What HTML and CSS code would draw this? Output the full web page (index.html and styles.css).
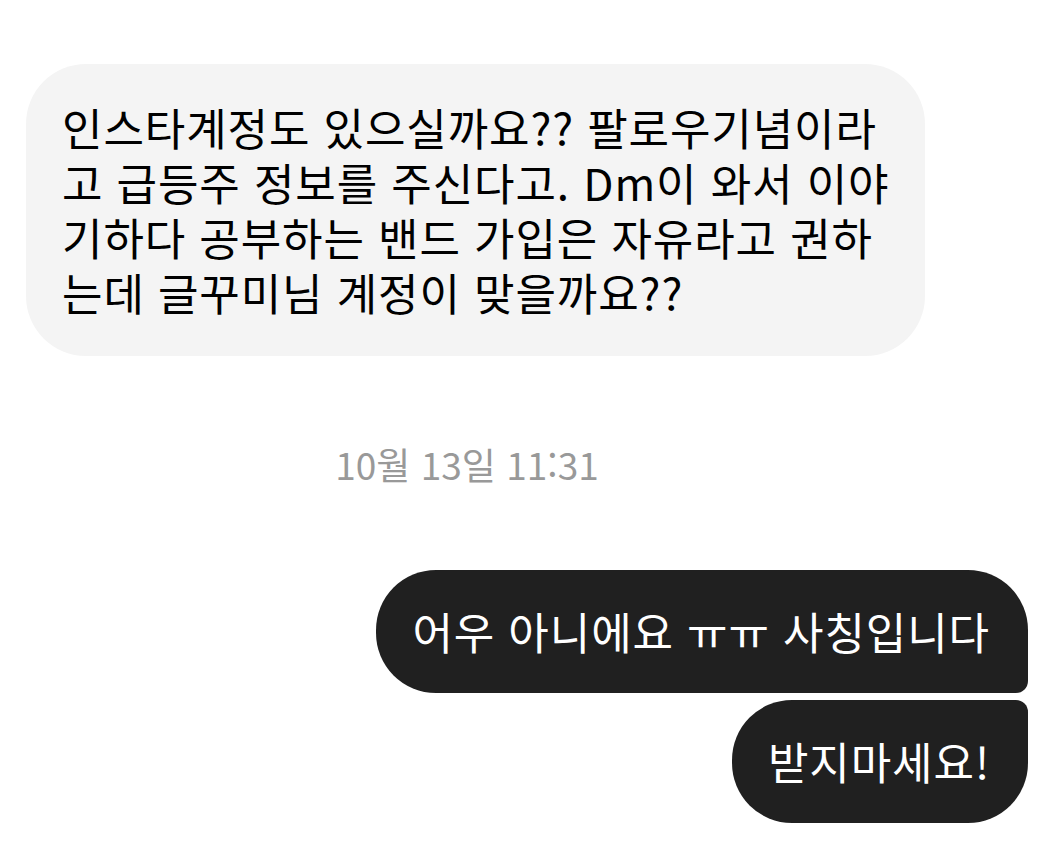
FILE: index.html
```html
<!DOCTYPE html>
<html lang="ko">
<head>
  <meta charset="UTF-8">
  <meta name="viewport" content="width=device-width, initial-scale=1.0">
  <title>Messages</title>
  <link rel="stylesheet" href="styles.css">
</head>
<body>
<div class="thread">
  <div class="msg msg-in">
    인스타계정도 있으실까요?? 팔로우기념이라<br>
    고 급등주 정보를 주신다고. Dm이 와서 이야<br>
    기하다 공부하는 밴드 가입은 자유라고 권하<br>
    는데 글꾸미님 계정이 맞을까요??
  </div>
  <div class="stamp">10월 13일 11:31</div>
  <div class="group-out">
    <div class="msg msg-out first">어우 아니에요 ㅠㅠ 사칭입니다</div>
    <div class="msg msg-out last">받지마세요!</div>
  </div>
</div>
</body>
</html>
```

FILE: styles.css
```css
body {
  margin: 0;
  background: #fff;
  font-family: 'Noto Sans CJK KR', 'Noto Sans', sans-serif;
}
.thread {
  display: flex;
  flex-direction: column;
  padding: 64px 24px 0 26px;
}
.msg {
  font-size: 44px;
  line-height: 55px;
  letter-spacing: 0.9px;
  border-radius: 60px;
}
.msg-in {
  align-self: flex-start;
  padding: 36px 36px;
  background-color: #f4f4f4;
  color: #000;
}
.stamp {
  margin: 86px 0 84px;
  padding-right: 120px;
  text-align: center;
  font-size: 37px;
  line-height: 44px;
  color: #999;
}
.group-out {
  display: flex;
  flex-direction: column;
  align-items: flex-end;
  gap: 7px;
}
.msg-out {
  padding: 34px 38px 34px 36px;
  background-color: #202020;
  color: #fff;
}
.msg-out.first {
  border-bottom-right-radius: 12px;
}
.msg-out.last {
  border-top-right-radius: 12px;
}
```
